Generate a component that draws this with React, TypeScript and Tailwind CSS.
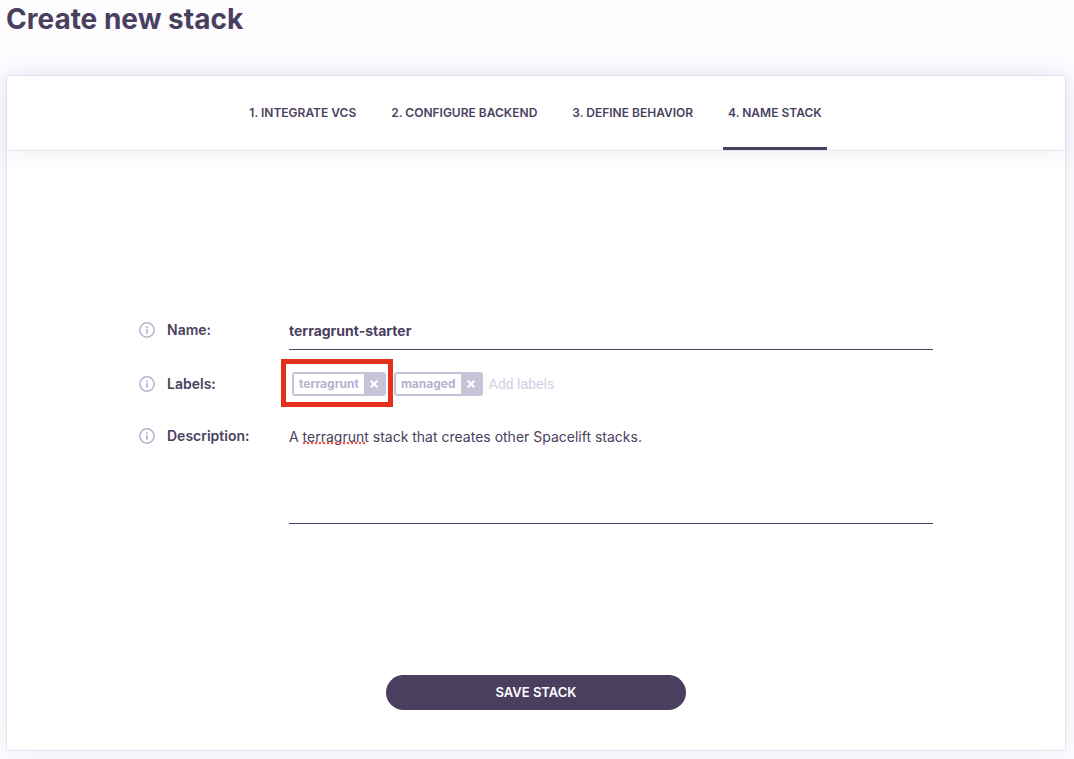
import { useState, type ReactNode } from "react";

const steps = [
  "1. Integrate VCS",
  "2. Configure backend",
  "3. Define behavior",
  "4. Name stack",
];

function InfoIcon() {
  return (
    <svg viewBox="0 0 16 16" className="size-4 shrink-0" fill="none" aria-hidden="true">
      <circle cx="8" cy="8" r="7.2" stroke="#b8b0cf" strokeWidth="1.5" />
      <path d="M8 7v4.8" stroke="#b8b0cf" strokeWidth="1.7" />
      <path d="M8 4.2v1.7" stroke="#b8b0cf" strokeWidth="1.7" />
    </svg>
  );
}

function FieldLabel({ htmlFor, children }: { htmlFor: string; children: ReactNode }) {
  return (
    <div className="flex w-[150px] shrink-0 items-center gap-3">
      <InfoIcon />
      <label htmlFor={htmlFor} className="text-sm font-semibold">
        {children}
      </label>
    </div>
  );
}

function Tag({ name, onRemove }: { name: string; onRemove: () => void }) {
  return (
    <span className="flex h-6 items-stretch rounded-[3px] border-2 border-[#c9c3da] bg-white">
      <span className="flex items-center px-[5px] text-xs font-bold text-[#b8b0cf]">{name}</span>
      <button
        type="button"
        aria-label={`Remove ${name}`}
        onClick={onRemove}
        className="flex w-5 items-center justify-center bg-[#c9c3da]"
      >
        <svg viewBox="0 0 8 8" className="size-2" fill="none" aria-hidden="true">
          <path d="M.7.7l6.6 6.6M7.3.7L.7 7.3" stroke="#fff" strokeWidth="2.2" />
        </svg>
      </button>
    </span>
  );
}

export default function App() {
  const [active, setActive] = useState(3);
  const [tags, setTags] = useState(["terragrunt", "managed"]);
  const [name, setName] = useState("terragrunt-starter");
  const [description, setDescription] = useState(
    "A terragrunt stack that creates other Spacelift stacks.",
  );

  return (
    <div className="flex min-h-screen flex-col bg-[#fdfcff] pr-2 pb-2 pl-1.5 font-['Inter',sans-serif] text-[#4b3f60]">
      <h1 className="pt-px text-[28px] leading-9 font-bold">Create new stack</h1>

      <main className="mt-[38px] flex grow flex-col rounded-xs border border-[#e6e3f3] bg-white shadow-[0_0_30px_rgba(75,63,120,0.09)]">
        <nav
          aria-label="Steps"
          className="flex h-[75px] justify-center gap-[25px] border-b border-[#e6e3f3] pr-px shadow-[0_4px_20px_rgba(75,63,120,0.07)]"
        >
          {steps.map((step, i) => (
            <button
              key={step}
              type="button"
              aria-current={i === active ? "step" : undefined}
              onClick={() => setActive(i)}
              className={
                i === active
                  ? "border-b-[3px] border-[#4b3f60] px-[5px] pt-0.5 text-xs font-semibold uppercase"
                  : "border-b-[3px] border-transparent px-[5px] pt-0.5 text-xs font-semibold uppercase"
              }
            >
              {step}
            </button>
          ))}
        </nav>

        <form
          onSubmit={(e) => e.preventDefault()}
          className="flex grow flex-col px-[132px] pt-[162px] pb-10"
        >
          <div className="flex h-[37px] items-start">
            <FieldLabel htmlFor="name">
              <span className="block py-[7px]">Name:</span>
            </FieldLabel>
            <input
              id="name"
              value={name}
              onChange={(e) => setName(e.target.value)}
              className="h-full min-w-0 grow border-b border-[#4b3f60] pb-0.5 text-sm font-bold outline-none"
            />
          </div>

          <div className="mt-[9px] flex h-12 items-center">
            <div className="pt-0.5">
              <FieldLabel htmlFor="labels">Labels:</FieldLabel>
            </div>
            <div className="-ml-2 flex min-w-0 grow items-center">
              {tags.map((tag, i) => (
                <span
                  key={tag}
                  className={
                    i === 0
                      ? "border-[5px] border-[#e3301c] pt-2 pr-0.5 pb-1.5 pl-1.5"
                      : "ml-px pt-0.5"
                  }
                >
                  <Tag name={tag} onRemove={() => setTags(tags.filter((t) => t !== tag))} />
                </span>
              ))}
              <input
                id="labels"
                placeholder="Add labels"
                className="ml-1.5 min-w-0 grow pt-0.5 font-['Liberation_Sans',Arial,sans-serif] text-sm outline-none placeholder:text-[#d3cee2]"
              />
            </div>
          </div>

          <div className="mt-[19px] flex items-start">
            <FieldLabel htmlFor="description">Description:</FieldLabel>
            <div className="relative flex min-w-0 grow">
              <textarea
                id="description"
                value={description}
                spellCheck={false}
                onChange={(e) => setDescription(e.target.value)}
                className="h-[98px] w-full resize-none border-b border-[#4b3f60] pt-px text-sm outline-none"
              />
              <svg
                className="pointer-events-none absolute top-[15px] left-[14px] h-1 w-[66px]"
                aria-hidden="true"
              >
                <line
                  x1="1"
                  y1="2"
                  x2="65"
                  y2="2"
                  stroke="#f0554a"
                  strokeWidth="2.6"
                  strokeLinecap="round"
                  strokeDasharray="0 4"
                />
              </svg>
            </div>
          </div>

          <button
            type="submit"
            className="mt-auto h-[35px] w-[300px] self-center rounded-full bg-[#4b3f60] text-[13px] font-semibold text-white uppercase"
          >
            Save stack
          </button>
        </form>
      </main>
    </div>
  );
}
